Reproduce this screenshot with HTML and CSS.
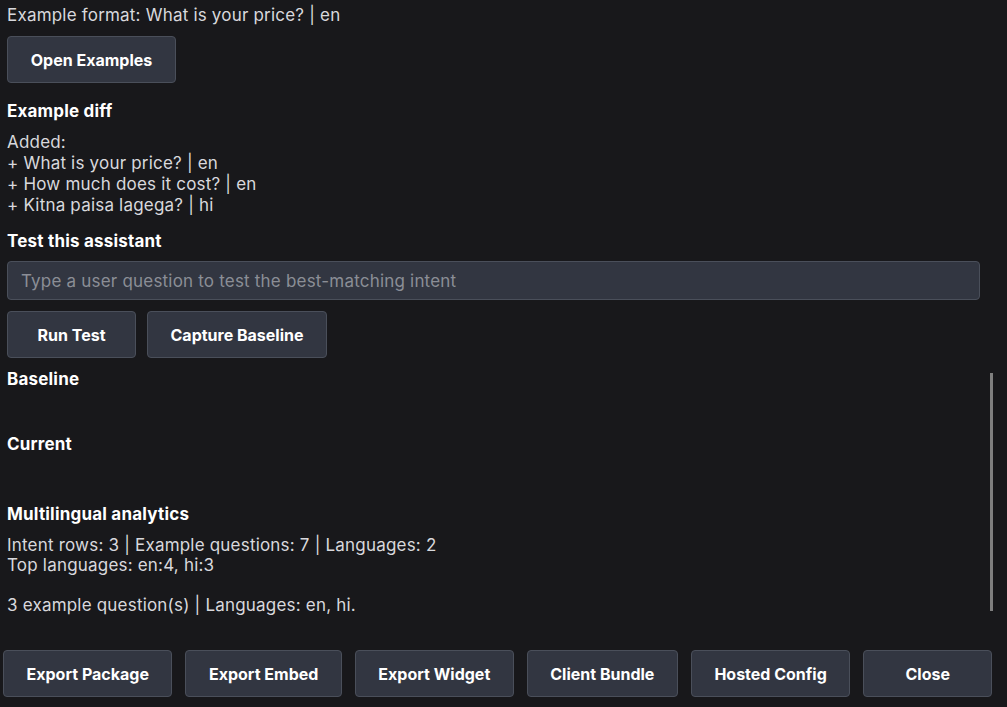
FILE: index.html
```html
<!DOCTYPE html>
<html lang="en">
<head>
  <meta charset="UTF-8">
  <meta name="viewport" content="width=device-width, initial-scale=1.0">
  <title>Assistant Builder</title>
  <link rel="stylesheet" href="styles.css">
</head>
<body>

  <div class="panel">
    <div class="scroll-area">
      <div class="scroll-content">
        <p class="format-line">Example format: What is your price? | en</p>
        <button class="action-button open-examples">Open Examples</button>

        <p class="section-title">Example diff</p>
        <p class="diff-block">Added:<br>+ What is your price? | en<br>+ How much does it cost? | en<br>+ Kitna paisa lagega? | hi</p>

        <p class="section-title test-title">Test this assistant</p>
        <input class="test-input" type="text" placeholder="Type a user question to test the best-matching intent">
        <div class="button-row">
          <button class="action-button run-test">Run Test</button>
          <button class="action-button">Capture Baseline</button>
        </div>

        <p class="section-title result-title">Baseline</p>
        <div class="result-box"></div>
        <p class="section-title result-title">Current</p>
        <div class="result-box current-box"></div>

        <p class="section-title">Multilingual analytics</p>
        <p class="stats">Intent rows: 3 | Example questions: 7 | Languages: 2<br>Top languages: en:4, hi:3</p>
        <p class="stats summary">3 example question(s) | Languages: en, hi.</p>
      </div>
      <div class="scroll-thumb"></div>
    </div>

    <div class="footer">
      <button class="action-button footer-button">Export Package</button>
      <button class="action-button footer-button">Export Embed</button>
      <button class="action-button footer-button">Export Widget</button>
      <button class="action-button footer-button">Client Bundle</button>
      <button class="action-button footer-button">Hosted Config</button>
      <button class="action-button footer-button close-button">Close</button>
    </div>
  </div>

</body>
</html>
```

FILE: styles.css
```css
body {
  margin: 0;
  background-color: #18181b;
  color: #d8d8dd;
  font-family: Inter, "Noto Sans", sans-serif;
  font-size: 17px;
  letter-spacing: 0.2px;
  line-height: 21px;
}

p {
  margin: 0;
}

.panel {
  display: flex;
  flex-direction: column;
  height: 100vh;
}

.scroll-area {
  position: relative;
  height: 625px;
  overflow: hidden;
}

.scroll-content {
  width: 973px;
  padding: 5px 0 0 7px;
}

.scroll-thumb {
  position: absolute;
  top: 373px;
  left: 990px;
  width: 3px;
  height: 238px;
  background-color: #7f7f7f;
}

.format-line {
  margin-bottom: 10px;
}

.action-button {
  background-color: #323641;
  color: white;
  border: 1px solid #4a4f5a;
  border-radius: 4px;
  font-family: Inter, "Noto Sans", sans-serif;
  font-size: 16px;
  font-weight: bold;
  letter-spacing: 0;
  white-space: nowrap;
  height: 47px;
  padding: 0 22.5px;
  cursor: pointer;
}

.open-examples {
  width: 169px;
}

.section-title {
  color: white;
  font-weight: bold;
  margin-top: 18px;
  margin-bottom: 10px;
}

.test-title {
  margin-top: 15px;
  margin-bottom: 9px;
}

.test-input {
  display: block;
  box-sizing: border-box;
  width: 973px;
  height: 39px;
  background-color: #323641;
  border: 1px solid #4a4f5a;
  border-radius: 4px;
  color: white;
  font-family: Inter, "Noto Sans", sans-serif;
  font-size: 17px;
  letter-spacing: 0.2px;
  padding: 0 13px;
}

.test-input::placeholder {
  color: #8b8e96;
}

.button-row {
  display: flex;
  gap: 11px;
  margin-top: 11px;
}

.run-test {
  width: 129px;
}

.result-title {
  margin-top: 11px;
  margin-bottom: 0;
}

.result-box {
  height: 33px;
}

.current-box {
  height: 31px;
}

.stats {
  line-height: 20px;
}

.summary {
  margin-top: 20px;
}

.footer {
  display: flex;
  gap: 13px;
  padding: 25px 0 0 3px;
}

.close-button {
  width: 129px;
}
```
